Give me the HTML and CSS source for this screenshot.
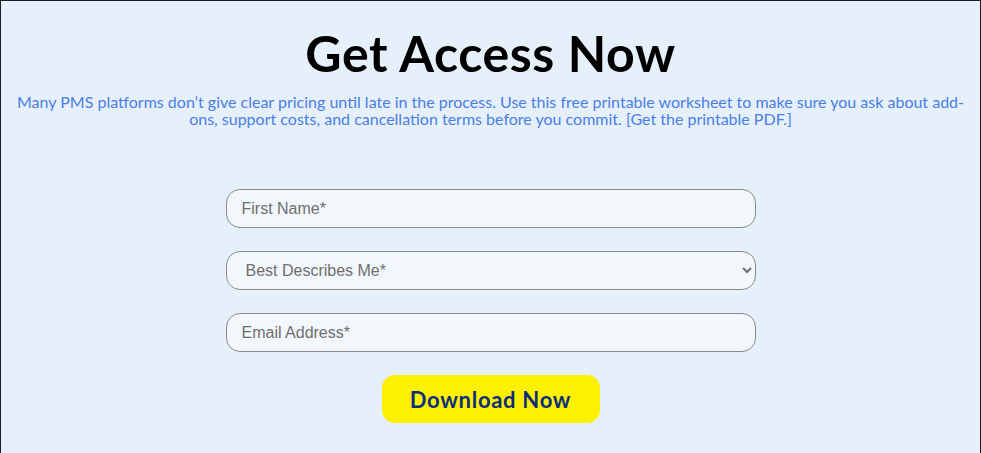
FILE: index.html
```html
<!DOCTYPE html>
<html lang="en">
<head>
	<meta charset="utf-8" />
	<title>Get Access Now</title>
	<link rel="stylesheet" href="styles.css">
</head>
<body>
	<section class="access">
		<h1 class="access-title">Get Access Now</h1>
		<p class="access-lead">Many PMS platforms don’t give clear pricing until late in the process. Use this free printable worksheet to make sure you ask about add-ons, support costs, and cancellation terms before you commit. [Get the printable PDF.]</p>
		<form class="access-form">
			<input class="field" type="text" placeholder="First Name*">
			<select class="field field-select">
				<option>Best Describes Me*</option>
			</select>
			<input class="field" type="email" placeholder="Email Address*">
			<button class="download" type="button">Download Now</button>
		</form>
	</section>
</body>
</html>
```

FILE: styles.css
```css
html, body {
	height: 100%;
}

body {
	margin: 0;
	background-color: #1b1c20;
	font-family: 'Lato', 'Liberation Sans', sans-serif;
}

.access {
	box-sizing: border-box;
	height: 100%;
	margin: 1px 1px 0 1px;
	background-color: #e6f0fa;
	text-align: center;
	padding: 24px 10px 0 10px;
}

.access-title {
	margin: 0;
	font-size: 50px;
	line-height: 56px;
	font-weight: 700;
	letter-spacing: 0.6px;
	color: #000000;
}

.access-lead {
	margin: 12px 0 0 0;
	font-size: 16px;
	line-height: 17px;
	color: #4a7ee6;
}

.access-form {
	width: 530px;
	margin: 62px auto 0 auto;
	display: flex;
	flex-direction: column;
	align-items: center;
	gap: 23px;
}

.field {
	box-sizing: border-box;
	width: 100%;
	height: 39px;
	padding: 0 15px;
	border: 1px solid #8a8a8a;
	border-radius: 14px;
	background-color: #f2f7fb;
	font-family: 'Liberation Sans', Arial, sans-serif;
	font-size: 16px;
	color: #555555;
}

.field::placeholder {
	color: #6f6f6f;
}

.field-select {
	padding-left: 15px;
	color: #6f6f6f;
}

.download {
	width: 218px;
	height: 48px;
	margin-top: 0;
	border: 0 none;
	border-radius: 13px;
	background-color: #fdf100;
	color: #0c2d7c;
	font-family: 'Lato', 'Liberation Sans', sans-serif;
	font-size: 22px;
	font-weight: 700;
	letter-spacing: 0.7px;
}
```
